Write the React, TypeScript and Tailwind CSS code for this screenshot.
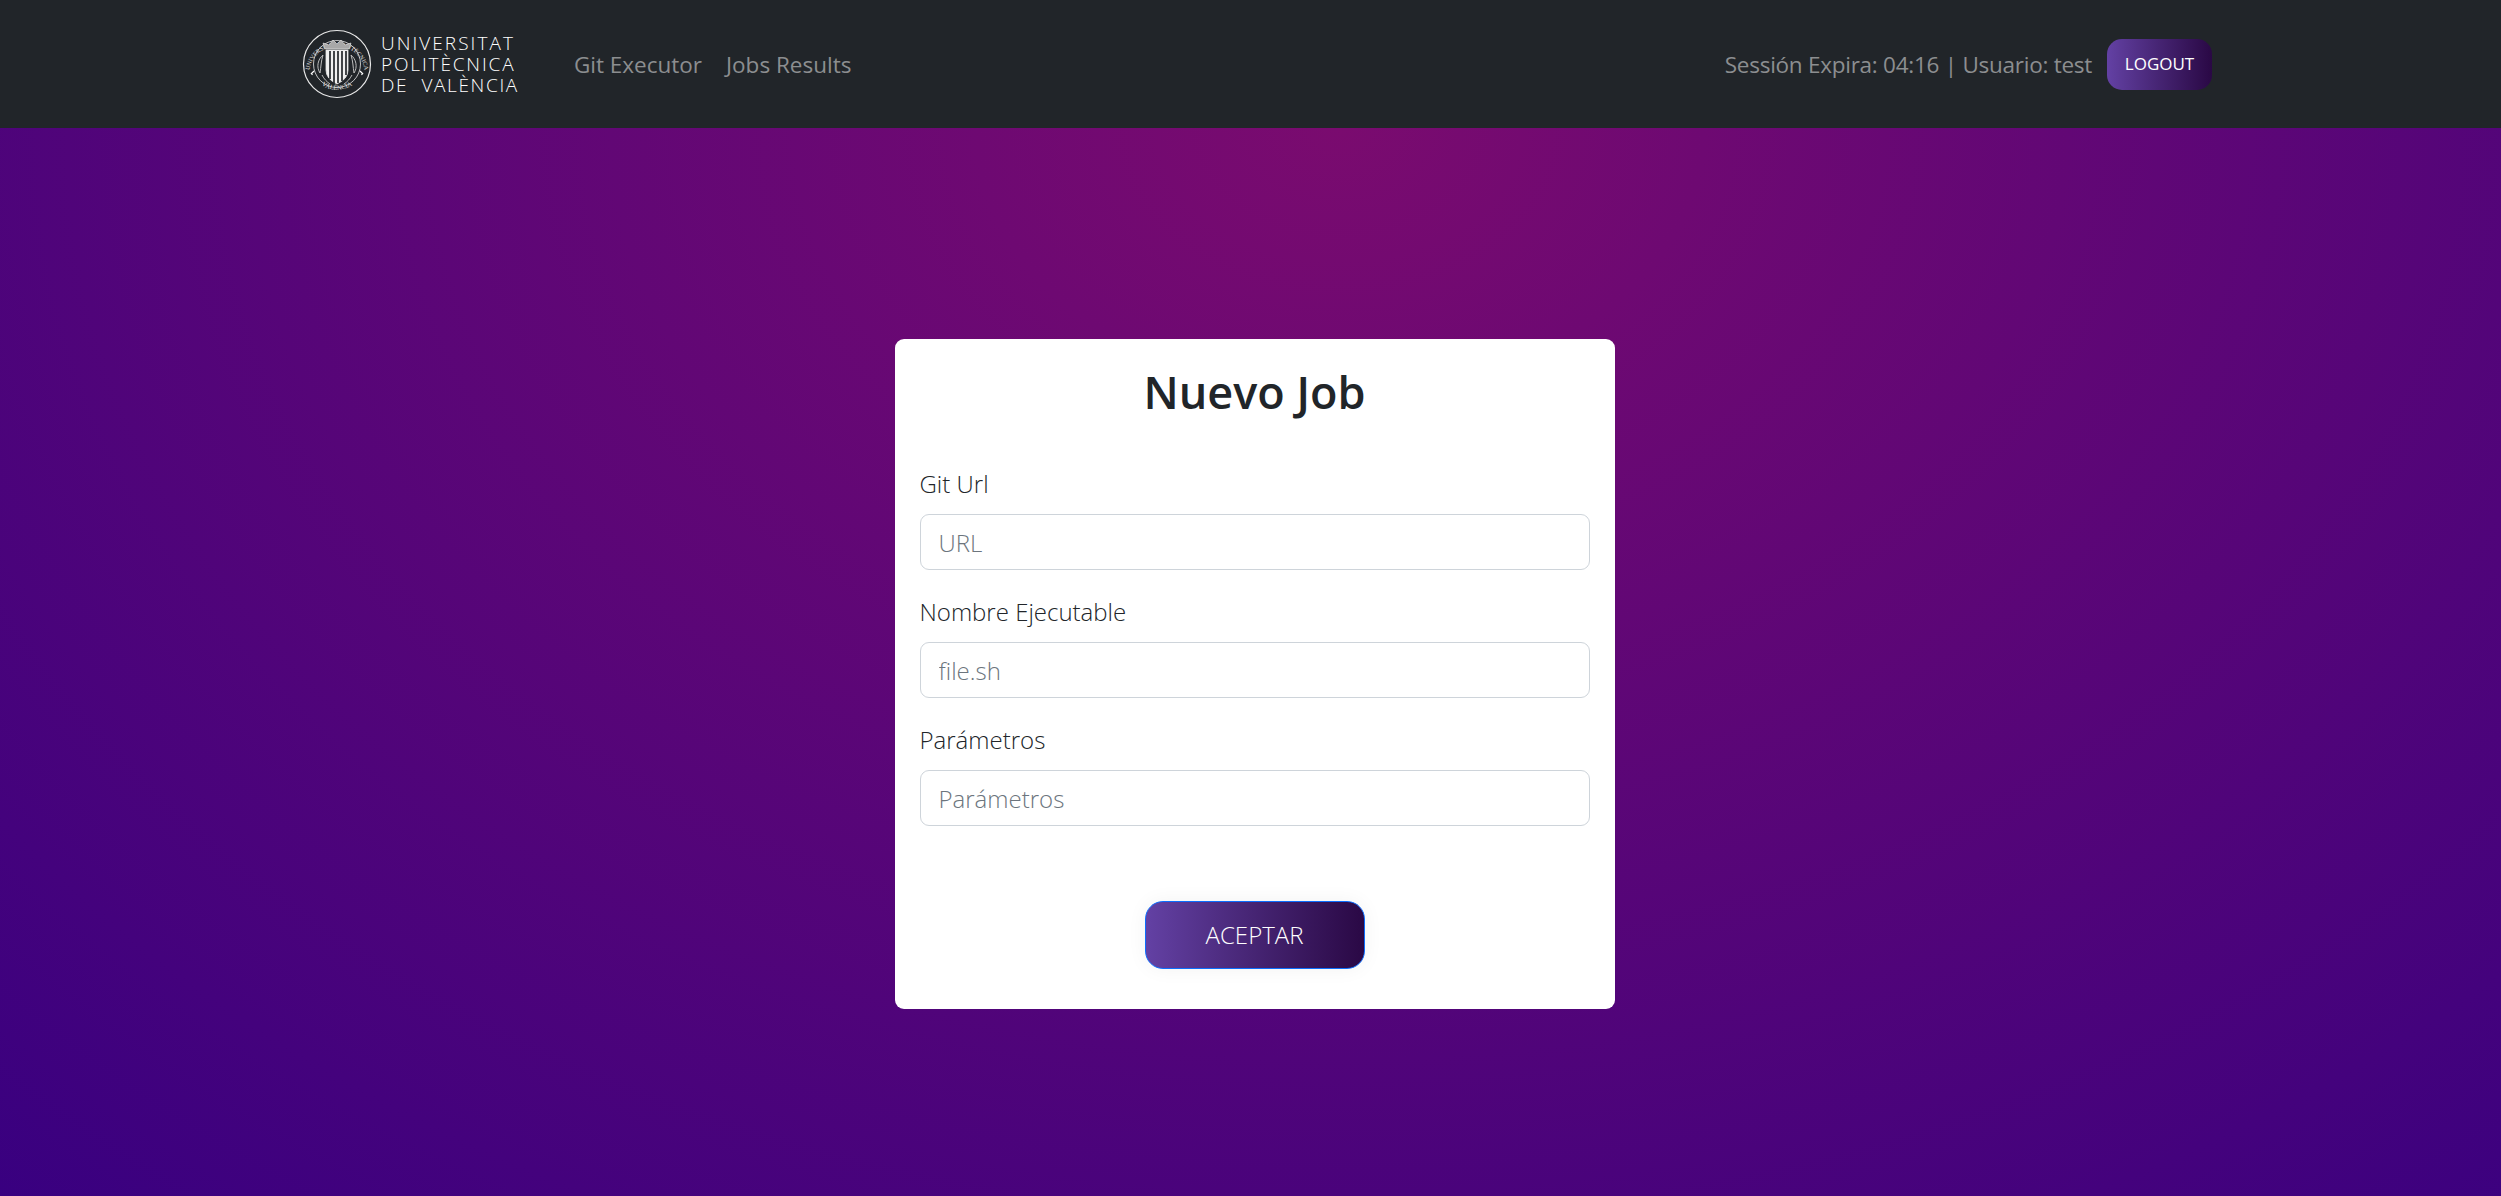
import React from 'react';

const Seal: React.FC = () => (
  <svg width="70" height="70" viewBox="0 0 70 70" fill="none" stroke="#e8e8e8">
    <circle cx="35" cy="35" r="33.5" strokeWidth="1.2" />
    <circle cx="35" cy="35" r="23.5" strokeWidth="0.8" />
    <defs>
      <path id="sealTop" d="M 7.5 40 A 28 28 0 0 1 62.5 40" />
      <path id="sealBottom" d="M 15 52 A 27 27 0 0 0 55 52" />
    </defs>
    <text fill="#e4e4e4" stroke="none" fontSize="6" fontFamily="Liberation Serif, serif">
      <textPath href="#sealTop" startOffset="50%" textAnchor="middle">UNIVERSITAT POLITÈCNICA</textPath>
    </text>
    <text fill="#e4e4e4" stroke="none" fontSize="6.5" fontFamily="Liberation Serif, serif">
      <textPath href="#sealBottom" startOffset="50%" textAnchor="middle">VALÈNCIA</textPath>
    </text>
    {/* crown */}
    <path d="M23 20 L21 14 L27 16 L31 11 L35 15 L39 11 L43 16 L49 14 L47 20 Z" fill="#a8a8a8" stroke="#e8e8e8" strokeWidth="0.6" />
    {/* shield */}
    <path d="M24 21 H46 V41 Q46 50 35 55 Q24 50 24 41 Z" fill="#f0f0f0" stroke="#e8e8e8" strokeWidth="0.8" />
    <path d="M28 22 V50 M32 22 V54 M36 22 V54 M40 22 V52 M44 22 V46" stroke="#24272b" strokeWidth="1.7" />
    {/* side ornaments */}
    <path d="M21 26 C16 30 14 38 18 44 C19 38 19 32 21 26 M49 26 C54 30 56 38 52 44 C51 38 51 32 49 26" stroke="#bdbdbd" strokeWidth="1" />
    <path d="M20 46 C22 50 25 53 28 55 M50 46 C48 50 45 53 42 55" stroke="#bdbdbd" strokeWidth="1" />
    <path d="M9 44 l1.5 2 M12 42 l-3 3 M61 44 l-1.5 2 M58 42 l3 3" stroke="#ffffff" strokeWidth="1.2" />
  </svg>
);

const Field: React.FC<{ label: string; placeholder: string }> = ({ label, placeholder }) => (
  <div className="mb-[24px]">
    <label className="block mb-[12px] text-[24px] leading-[36px] font-light text-[#212529]">{label}</label>
    <input
      placeholder={placeholder}
      className="block w-full h-[56px] px-[18px] bg-white border border-[#ced4da] rounded-[9px] text-[24px] font-light outline-none placeholder:text-[#6c757d]"
    />
  </div>
);

const App: React.FC = () => {
  return (
    <div className="flex flex-col h-screen font-['Open_Sans',sans-serif] bg-[radial-gradient(ellipse_2000px_1463px_at_1340px_128px,#7a0b6f_0%,#380080_100%)]">
      {/* Header */}
      <nav className="h-[128px] shrink-0 bg-[#212529]">
        <div className="w-[1934px] h-full ml-[290px] px-[12px] flex items-center justify-between">
          <div className="flex items-center">
            <div className="flex items-center gap-[9px] mr-[55px]">
              <Seal />
              <div className="flex flex-col text-white text-[19px] leading-[21px] font-light">
                <span className="tracking-[2.05px]">UNIVERSITAT</span>
                <span className="tracking-[1.85px]">POLITÈCNICA</span>
                <span className="tracking-[1.65px]">DE&nbsp; VALÈNCIA</span>
              </div>
            </div>
            <a className="mt-[2px] text-[22.5px] text-[#8c8e90] mr-[24px]">Git Executor</a>
            <a className="mt-[2px] text-[22.5px] text-[#8c8e90]">Jobs Results</a>
          </div>
          <div className="flex items-center gap-[15px]">
            <span className="mt-[2px] text-[22.5px] tracking-[-0.26px] text-[#8c8e90]">Sessión Expira: 04:16 | Usuario: test</span>
            <button className="w-[105px] h-[51px] rounded-[15px] text-[17px] text-white bg-gradient-to-r from-[#6341a4] to-[#2a0845]">LOGOUT</button>
          </div>
        </div>
      </nav>

      {/* Form */}
      <div className="flex-1 flex items-center justify-center pt-[24px] pl-[8px]">
        <div className="w-[720px] h-[670px] bg-white rounded-[9px] px-[25px] pt-[26px]">
          <h1 className="text-center text-[45px] leading-[54px] font-semibold text-[#212529] mb-[47px]">Nuevo Job</h1>
          <Field label="Git Url" placeholder="URL" />
          <Field label="Nombre Ejecutable" placeholder="file.sh" />
          <Field label="Parámetros" placeholder="Parámetros" />
          <div className="flex justify-center mt-[75px]">
            <button className="w-[220px] h-[68px] rounded-[18px] border border-[#0d6efd] text-[24px] font-light text-white bg-gradient-to-r from-[#6341a4] to-[#2a0845] shadow-[0_0_20px_rgba(0,0,0,0.05)]">ACEPTAR</button>
          </div>
        </div>
      </div>
    </div>
  );
};

export default App;
